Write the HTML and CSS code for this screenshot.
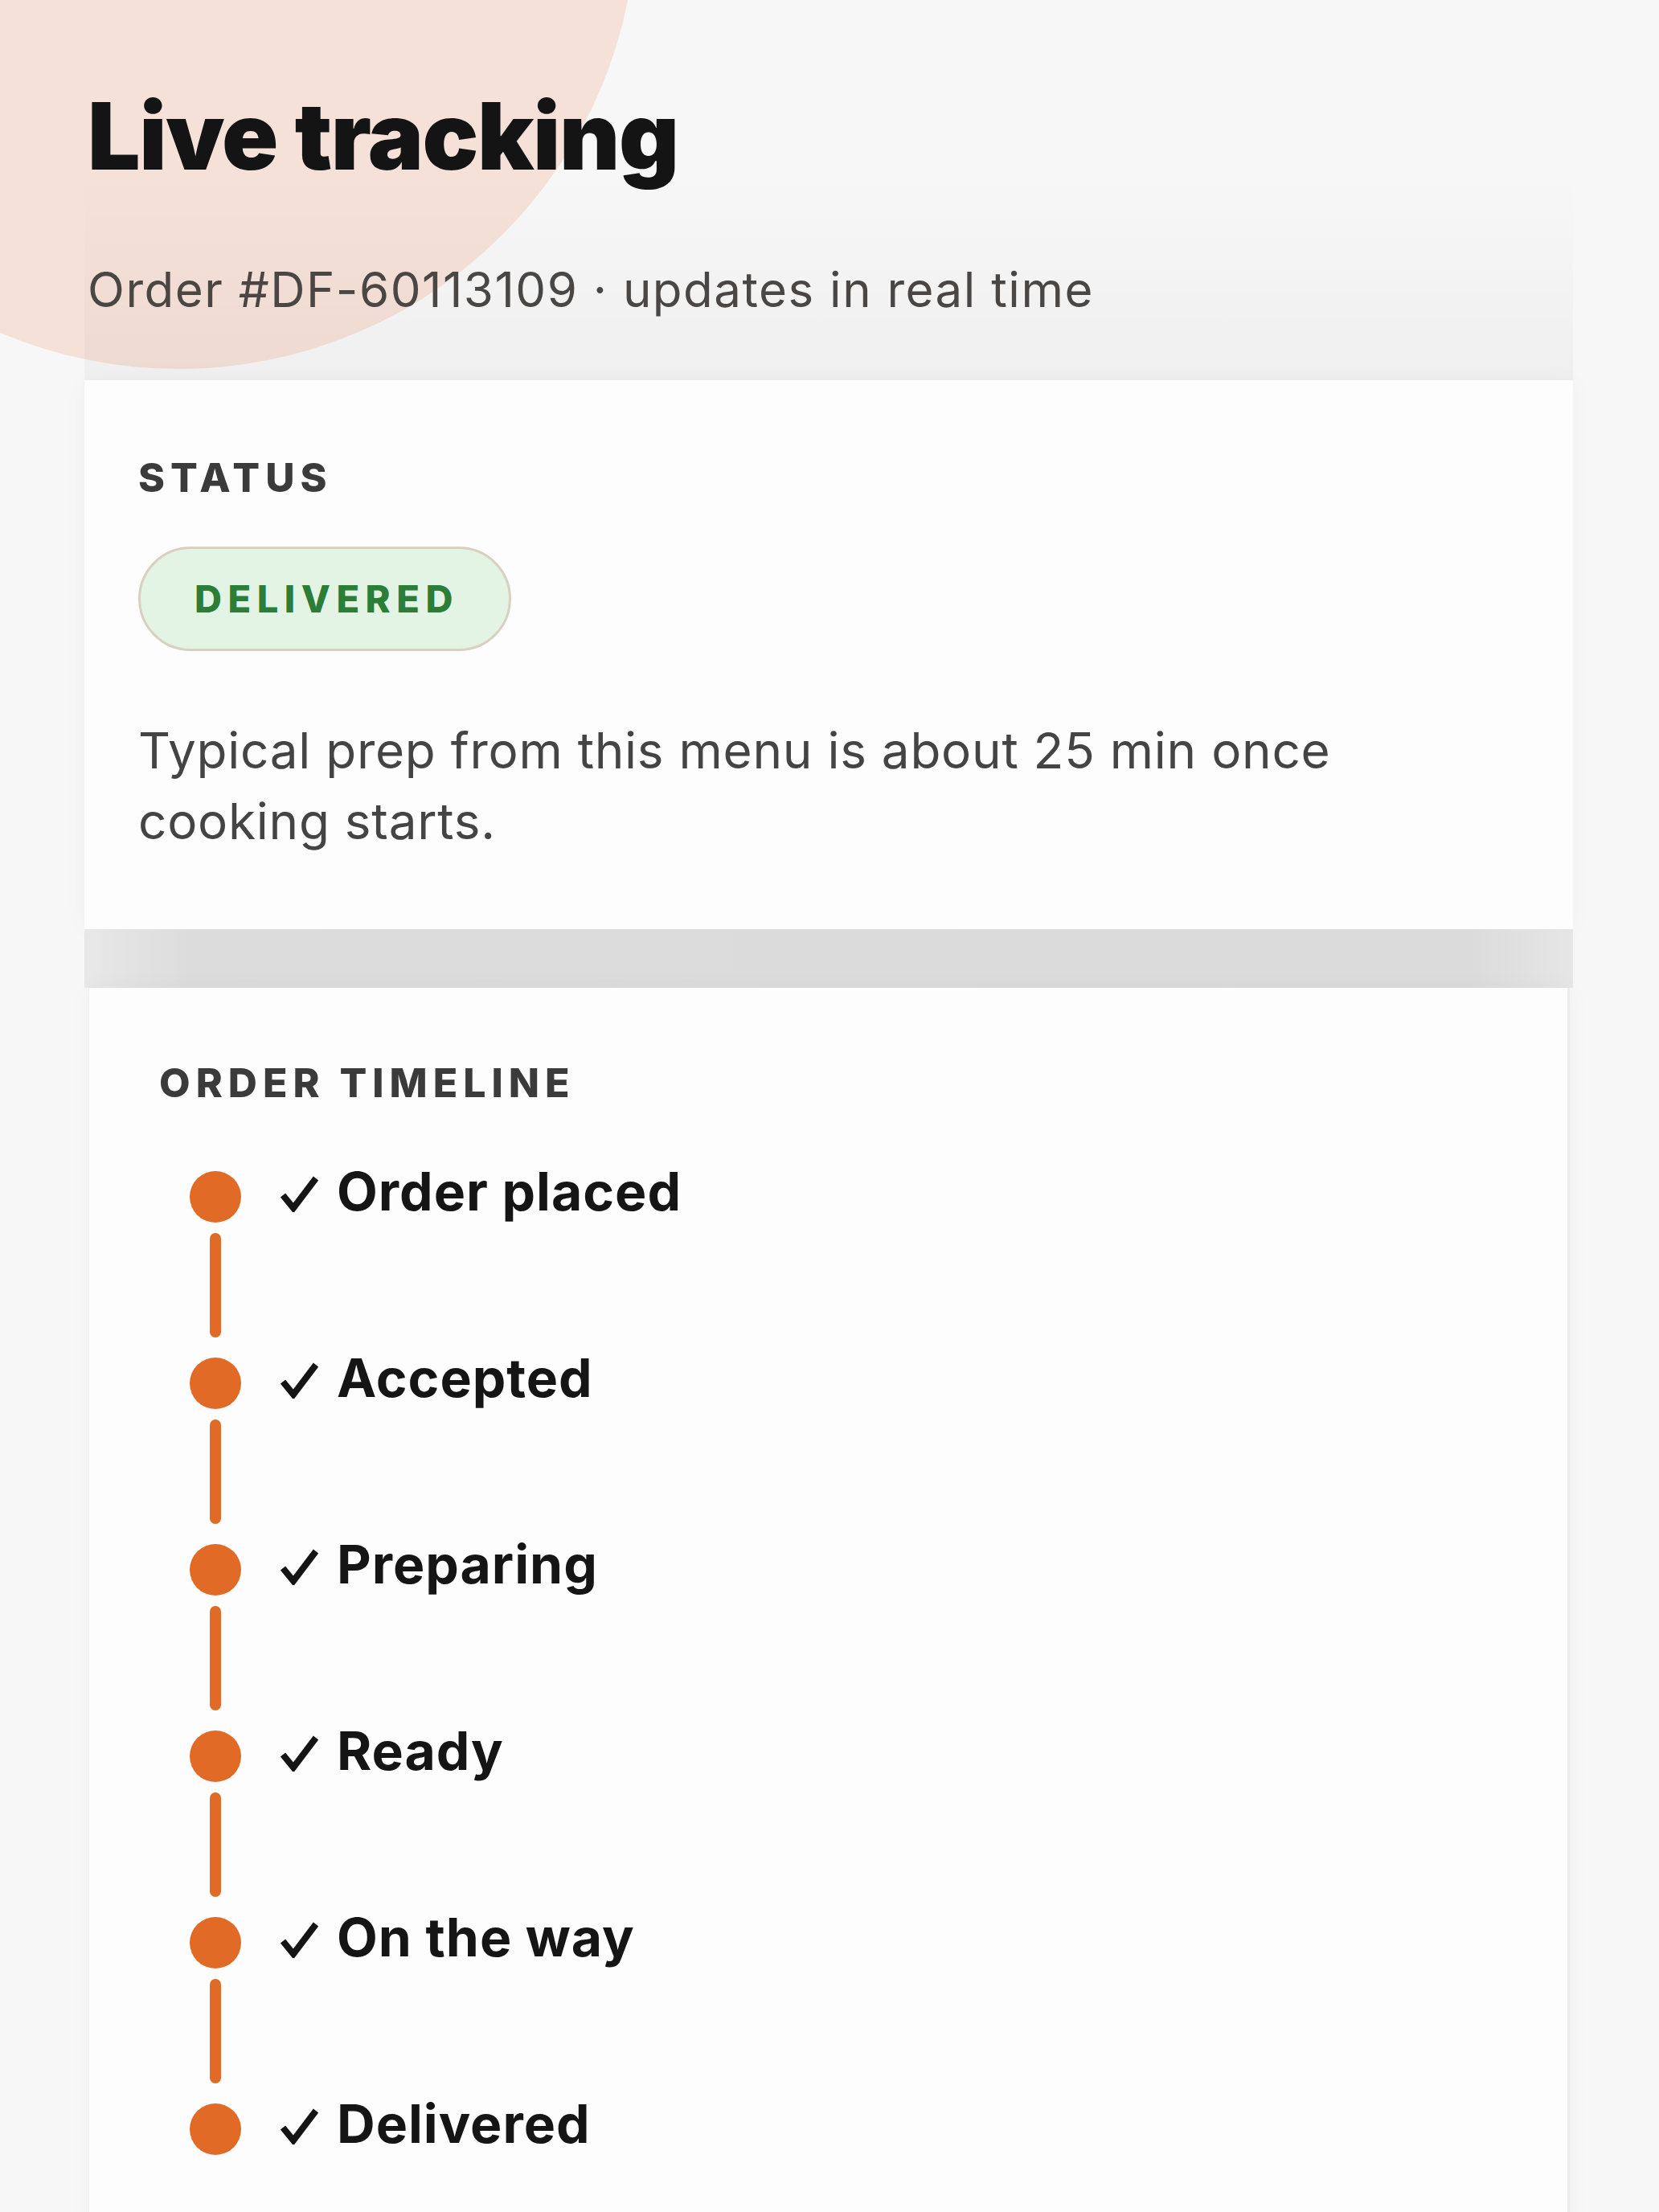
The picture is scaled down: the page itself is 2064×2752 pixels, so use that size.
FILE: index.html
```html
<!DOCTYPE html>
<html lang="en">
<head>
    <meta charset="UTF-8">
    <meta name="viewport" content="width=device-width, initial-scale=1.0">
    <title>Live tracking</title>
    <link rel="stylesheet" href="styles.css">
</head>
<body>
    <div class="blob"></div>

    <main class="page">
        <header class="page-header">
            <h1>Live tracking</h1>
            <p class="subtitle">Order #DF-60113109 · updates in real time</p>
        </header>

        <section class="card status-card">
            <h2 class="card-label">Status</h2>
            <span class="pill pill-delivered">Delivered</span>
            <p class="eta-note">Typical prep from this menu is about 25 min once cooking starts.</p>
        </section>

        <div class="section-gap"></div>

        <section class="card timeline-card">
            <h2 class="card-label">Order timeline</h2>
            <ol class="timeline">
                <li class="step done">
                    <div class="marker"><span class="dot"></span><span class="rail"></span></div>
                    <span class="step-name"><svg class="tick" viewBox="0 0 50 46" aria-label="done"><polyline points="5,25 18,41 46,4"/></svg>Order placed</span>
                </li>
                <li class="step done">
                    <div class="marker"><span class="dot"></span><span class="rail"></span></div>
                    <span class="step-name"><svg class="tick" viewBox="0 0 50 46" aria-label="done"><polyline points="5,25 18,41 46,4"/></svg>Accepted</span>
                </li>
                <li class="step done">
                    <div class="marker"><span class="dot"></span><span class="rail"></span></div>
                    <span class="step-name"><svg class="tick" viewBox="0 0 50 46" aria-label="done"><polyline points="5,25 18,41 46,4"/></svg>Preparing</span>
                </li>
                <li class="step done">
                    <div class="marker"><span class="dot"></span><span class="rail"></span></div>
                    <span class="step-name"><svg class="tick" viewBox="0 0 50 46" aria-label="done"><polyline points="5,25 18,41 46,4"/></svg>Ready</span>
                </li>
                <li class="step done">
                    <div class="marker"><span class="dot"></span><span class="rail"></span></div>
                    <span class="step-name"><svg class="tick" viewBox="0 0 50 46" aria-label="done"><polyline points="5,25 18,41 46,4"/></svg>On the way</span>
                </li>
                <li class="step done">
                    <div class="marker"><span class="dot"></span></div>
                    <span class="step-name"><svg class="tick" viewBox="0 0 50 46" aria-label="done"><polyline points="5,25 18,41 46,4"/></svg>Delivered</span>
                </li>
            </ol>
        </section>
    </main>
</body>
</html>
```

FILE: styles.css
```css
body {
    font-family: 'Inter', 'Noto Sans', Arial, sans-serif;
    margin: 0;
    background-color: #f7f7f7;
    color: #151515;
    overflow: hidden;
}

/* peach circle in the top-left corner */
.blob {
    position: absolute;
    left: -348px;
    top: -681px;
    width: 1140px;
    height: 1140px;
    border-radius: 50%;
    background-color: #f5e1d8;
    z-index: 0;
}

.page {
    position: relative;
    z-index: 1;
    padding: 0 107px 0 105px;
}

.page-header {
    padding: 111px 0 77px 4px;
    background: linear-gradient(to bottom, rgba(0, 0, 0, 0) 45%, rgba(0, 0, 0, 0.03) 100%);
}

.page-header h1 {
    margin: 0;
    font-size: 116px;
    line-height: 1;
    font-weight: 900;
    letter-spacing: -0.012em;
    color: #141414;
}

.subtitle {
    margin: 97px 0 0;
    font-size: 60px;
    line-height: 1.2;
    letter-spacing: 0.025em;
    color: #4a4644;
}

.card {
    background-color: #fdfdfd;
    box-shadow: 0 0 30px rgba(0, 0, 0, 0.03);
}

.card-label {
    margin: 0;
    font-size: 50px;
    line-height: 60px;
    font-weight: 800;
    letter-spacing: 0.14em;
    text-transform: uppercase;
    color: #3b3b3b;
}

.status-card {
    padding: 91px 67px 90px;
}

.pill {
    display: inline-block;
    margin-top: 56px;
    padding: 35px 62px 35px 67px;
    border-radius: 70px;
    font-size: 47px;
    line-height: 54px;
    font-weight: 800;
    letter-spacing: 0.16em;
    text-transform: uppercase;
}

.pill-delivered {
    background-color: #e3f4e5;
    border: 3px solid #d9d0bf;
    color: #2b7d37;
}

.eta-note {
    margin: 80px 0 0;
    max-width: 1600px;
    font-size: 62px;
    line-height: 88px;
    letter-spacing: 0.012em;
    color: #444;
}

.section-gap {
    height: 73px;
    background: linear-gradient(to right, #e8e8e8, #dcdcdc 7%, #dbdbdb 93%, #e6e6e6);
}

.timeline-card {
    min-height: 1600px;
    margin: 0 4px 0 5px;
    padding: 88px 87px;
    border-right: 3px solid #ececec;
    border-left: 1px solid #f0f0f0;
}

.timeline {
    list-style: none;
    margin: 80px 0 0;
    padding: 0 0 0 38px;
    display: flex;
    flex-direction: column;
    gap: 25px;
}

.step {
    display: flex;
    align-items: flex-start;
    gap: 47px;
}

.marker {
    width: 64px;
    display: flex;
    flex-direction: column;
    align-items: center;
}

.dot {
    width: 64px;
    height: 64px;
    border-radius: 50%;
    background-color: #e06a26;
}

.rail {
    width: 14px;
    height: 130px;
    margin-top: 13px;
    border-radius: 7px;
    background-color: #e06a26;
}

.step-name {
    display: flex;
    align-items: center;
    margin-top: -7px;
    font-size: 66px;
    line-height: 64px;
    font-weight: 700;
    letter-spacing: 0.015em;
    color: #151515;
}

.tick {
    width: 50px;
    height: 46px;
    margin: 6px 22px 0 0;
    flex-shrink: 0;
}

.tick polyline {
    fill: none;
    stroke: #151515;
    stroke-width: 8;
    stroke-linejoin: miter;
}
```
